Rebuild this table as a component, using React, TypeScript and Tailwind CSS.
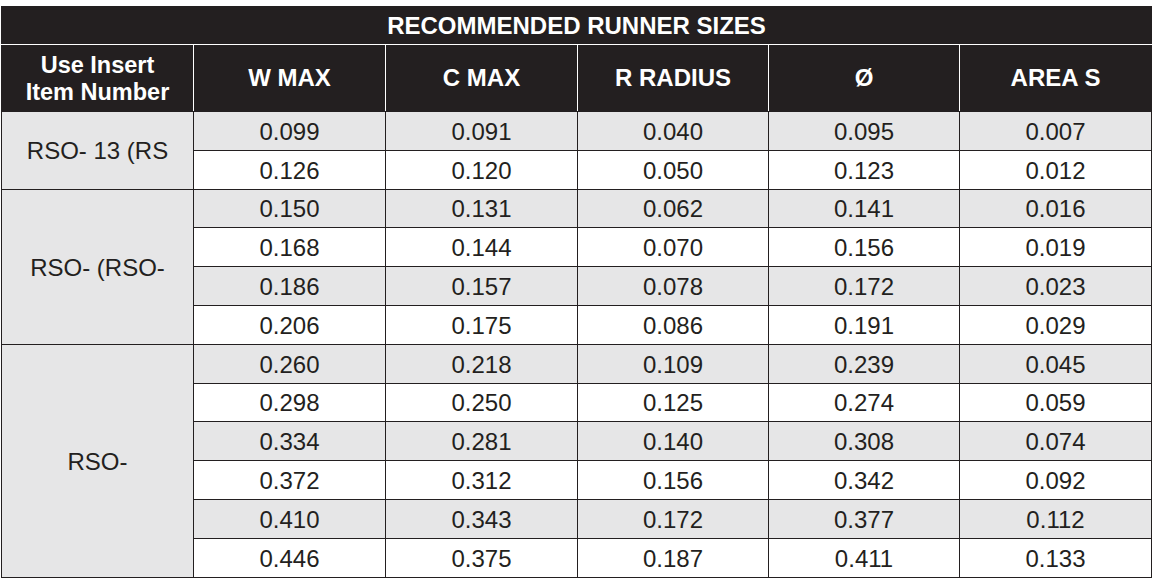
import React from 'react';

type Group = { label: string; rows: string[][] };

var groups: Group[] = [
  {
    label: 'RSO- 13 (RS',
    rows: [
      ['0.099', '0.091', '0.040', '0.095', '0.007'],
      ['0.126', '0.120', '0.050', '0.123', '0.012'],
    ],
  },
  {
    label: 'RSO- (RSO-',
    rows: [
      ['0.150', '0.131', '0.062', '0.141', '0.016'],
      ['0.168', '0.144', '0.070', '0.156', '0.019'],
      ['0.186', '0.157', '0.078', '0.172', '0.023'],
      ['0.206', '0.175', '0.086', '0.191', '0.029'],
    ],
  },
  {
    label: 'RSO-',
    rows: [
      ['0.260', '0.218', '0.109', '0.239', '0.045'],
      ['0.298', '0.250', '0.125', '0.274', '0.059'],
      ['0.334', '0.281', '0.140', '0.308', '0.074'],
      ['0.372', '0.312', '0.156', '0.342', '0.092'],
      ['0.410', '0.343', '0.172', '0.377', '0.112'],
      ['0.446', '0.375', '0.187', '0.411', '0.133'],
    ],
  },
];

var headers = ['W MAX', 'C MAX', 'R RADIUS', 'Ø', 'AREA S'];

export default function App() {
  return (
    <div className="w-[1157px] h-[578px] bg-white pt-[6px] pl-[1px] font-['Liberation_Sans',Arial,sans-serif] text-[#231f20]">
      <table className="w-[1150px] table-fixed border-collapse">
        <colgroup>
          <col className="w-[192px]" />
          <col className="w-[192px]" />
          <col className="w-[192px]" />
          <col className="w-[191px]" />
          <col className="w-[191px]" />
          <col className="w-[192px]" />
        </colgroup>
        <thead>
          <tr className="h-[38px] bg-[#231f20]">
            <th colSpan={6} className="border border-[#231f20] border-b-white text-white text-[24px] font-bold leading-none text-center pt-[1px]">
              RECOMMENDED RUNNER SIZES
            </th>
          </tr>
          <tr className="h-[67px] bg-[#231f20]">
            <th className="border border-[#231f20] border-t-white border-r-white text-white text-[23.5px] font-bold leading-[27px] text-center pt-[1px]">
              Use Insert
              <br />
              Item Number
            </th>
            {headers.map(function(h, i) {
              return (
                <th
                  key={h}
                  className={'border border-[#231f20] border-t-white text-white text-[24px] font-bold leading-none text-center ' + (i < headers.length - 1 ? 'border-r-white' : '')}
                >
                  {h}
                </th>
              );
            })}
          </tr>
        </thead>
        <tbody>
          {groups.map(function(g) {
            return g.rows.map(function(row, ri) {
              var shaded = ri % 2 === 0;
              return (
                <tr key={g.label + ri} className="h-[38.8px]">
                  {ri === 0 && (
                    <td
                      rowSpan={g.rows.length}
                      className="border border-[#231f20] bg-[#e6e6e7] text-[24px] leading-none text-center pt-[2px]"
                    >
                      {g.label}
                    </td>
                  )}
                  {row.map(function(v, ci) {
                    return (
                      <td
                        key={ci}
                        className={'border border-[#231f20] text-[24px] leading-none text-center pt-[2px] ' + (shaded ? 'bg-[#e6e6e7]' : 'bg-white')}
                      >
                        {v}
                      </td>
                    );
                  })}
                </tr>
              );
            });
          })}
        </tbody>
      </table>
    </div>
  );
}
